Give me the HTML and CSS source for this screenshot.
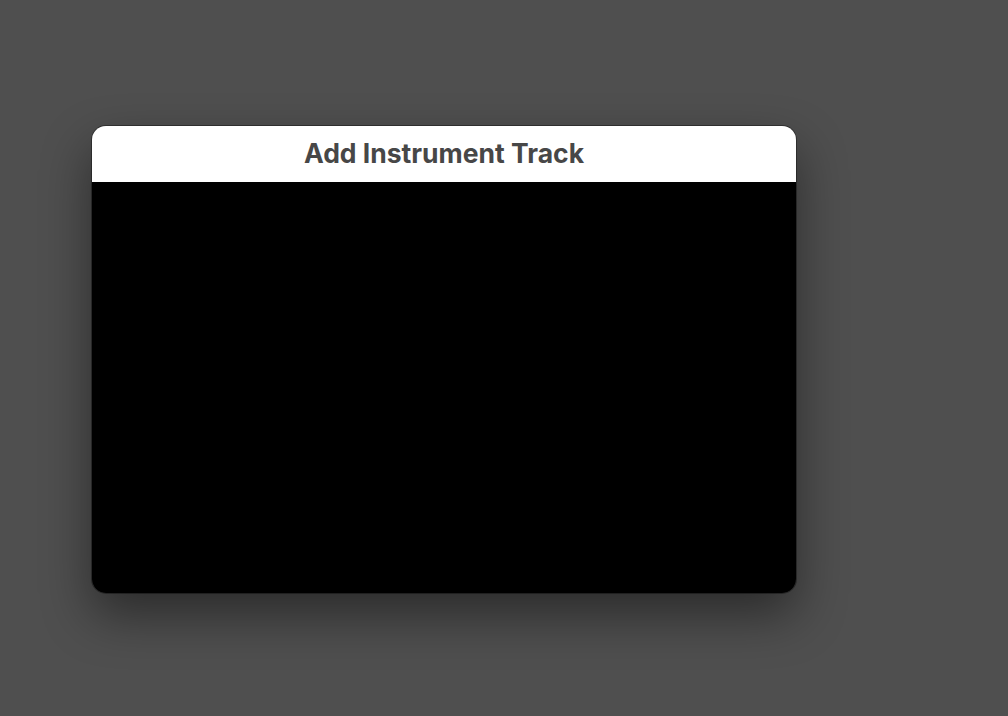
FILE: index.html
```html
<!DOCTYPE html>
<html lang="en">
<head>
    <meta charset="UTF-8">
    <title>Add Instrument Track</title>
    <link rel="stylesheet" href="styles.css">
</head>
<body>
    <div class="dialog">
        <div class="titlebar">
            <h1>Add Instrument Track</h1>
        </div>
        <div class="content"></div>
    </div>
</body>
</html>
```

FILE: styles.css
```css
html, body {
    margin: 0;
    height: 100%;
}
body {
    background-color: #4f4f4f;
    font-family: Inter, "Liberation Sans", sans-serif;
    padding: 126px 0 0 92px;
    box-sizing: border-box;
    overflow: hidden;
}
.dialog {
    width: 704px;
    height: 467px;
    border-radius: 14px;
    overflow: hidden;
    display: flex;
    flex-direction: column;
    box-shadow: 0 0 0 1px rgba(0, 0, 0, 0.35), 0 22px 50px rgba(0, 0, 0, 0.45);
}
.titlebar {
    height: 56px;
    background-color: #ffffff;
    display: flex;
    align-items: center;
    justify-content: center;
}
.titlebar h1 {
    margin: 0;
    font-size: 26.5px;
    font-weight: 700;
    color: #474747;
    padding-bottom: 2px;
}
.content {
    flex: 1;
    background-color: #000000;
}
```
